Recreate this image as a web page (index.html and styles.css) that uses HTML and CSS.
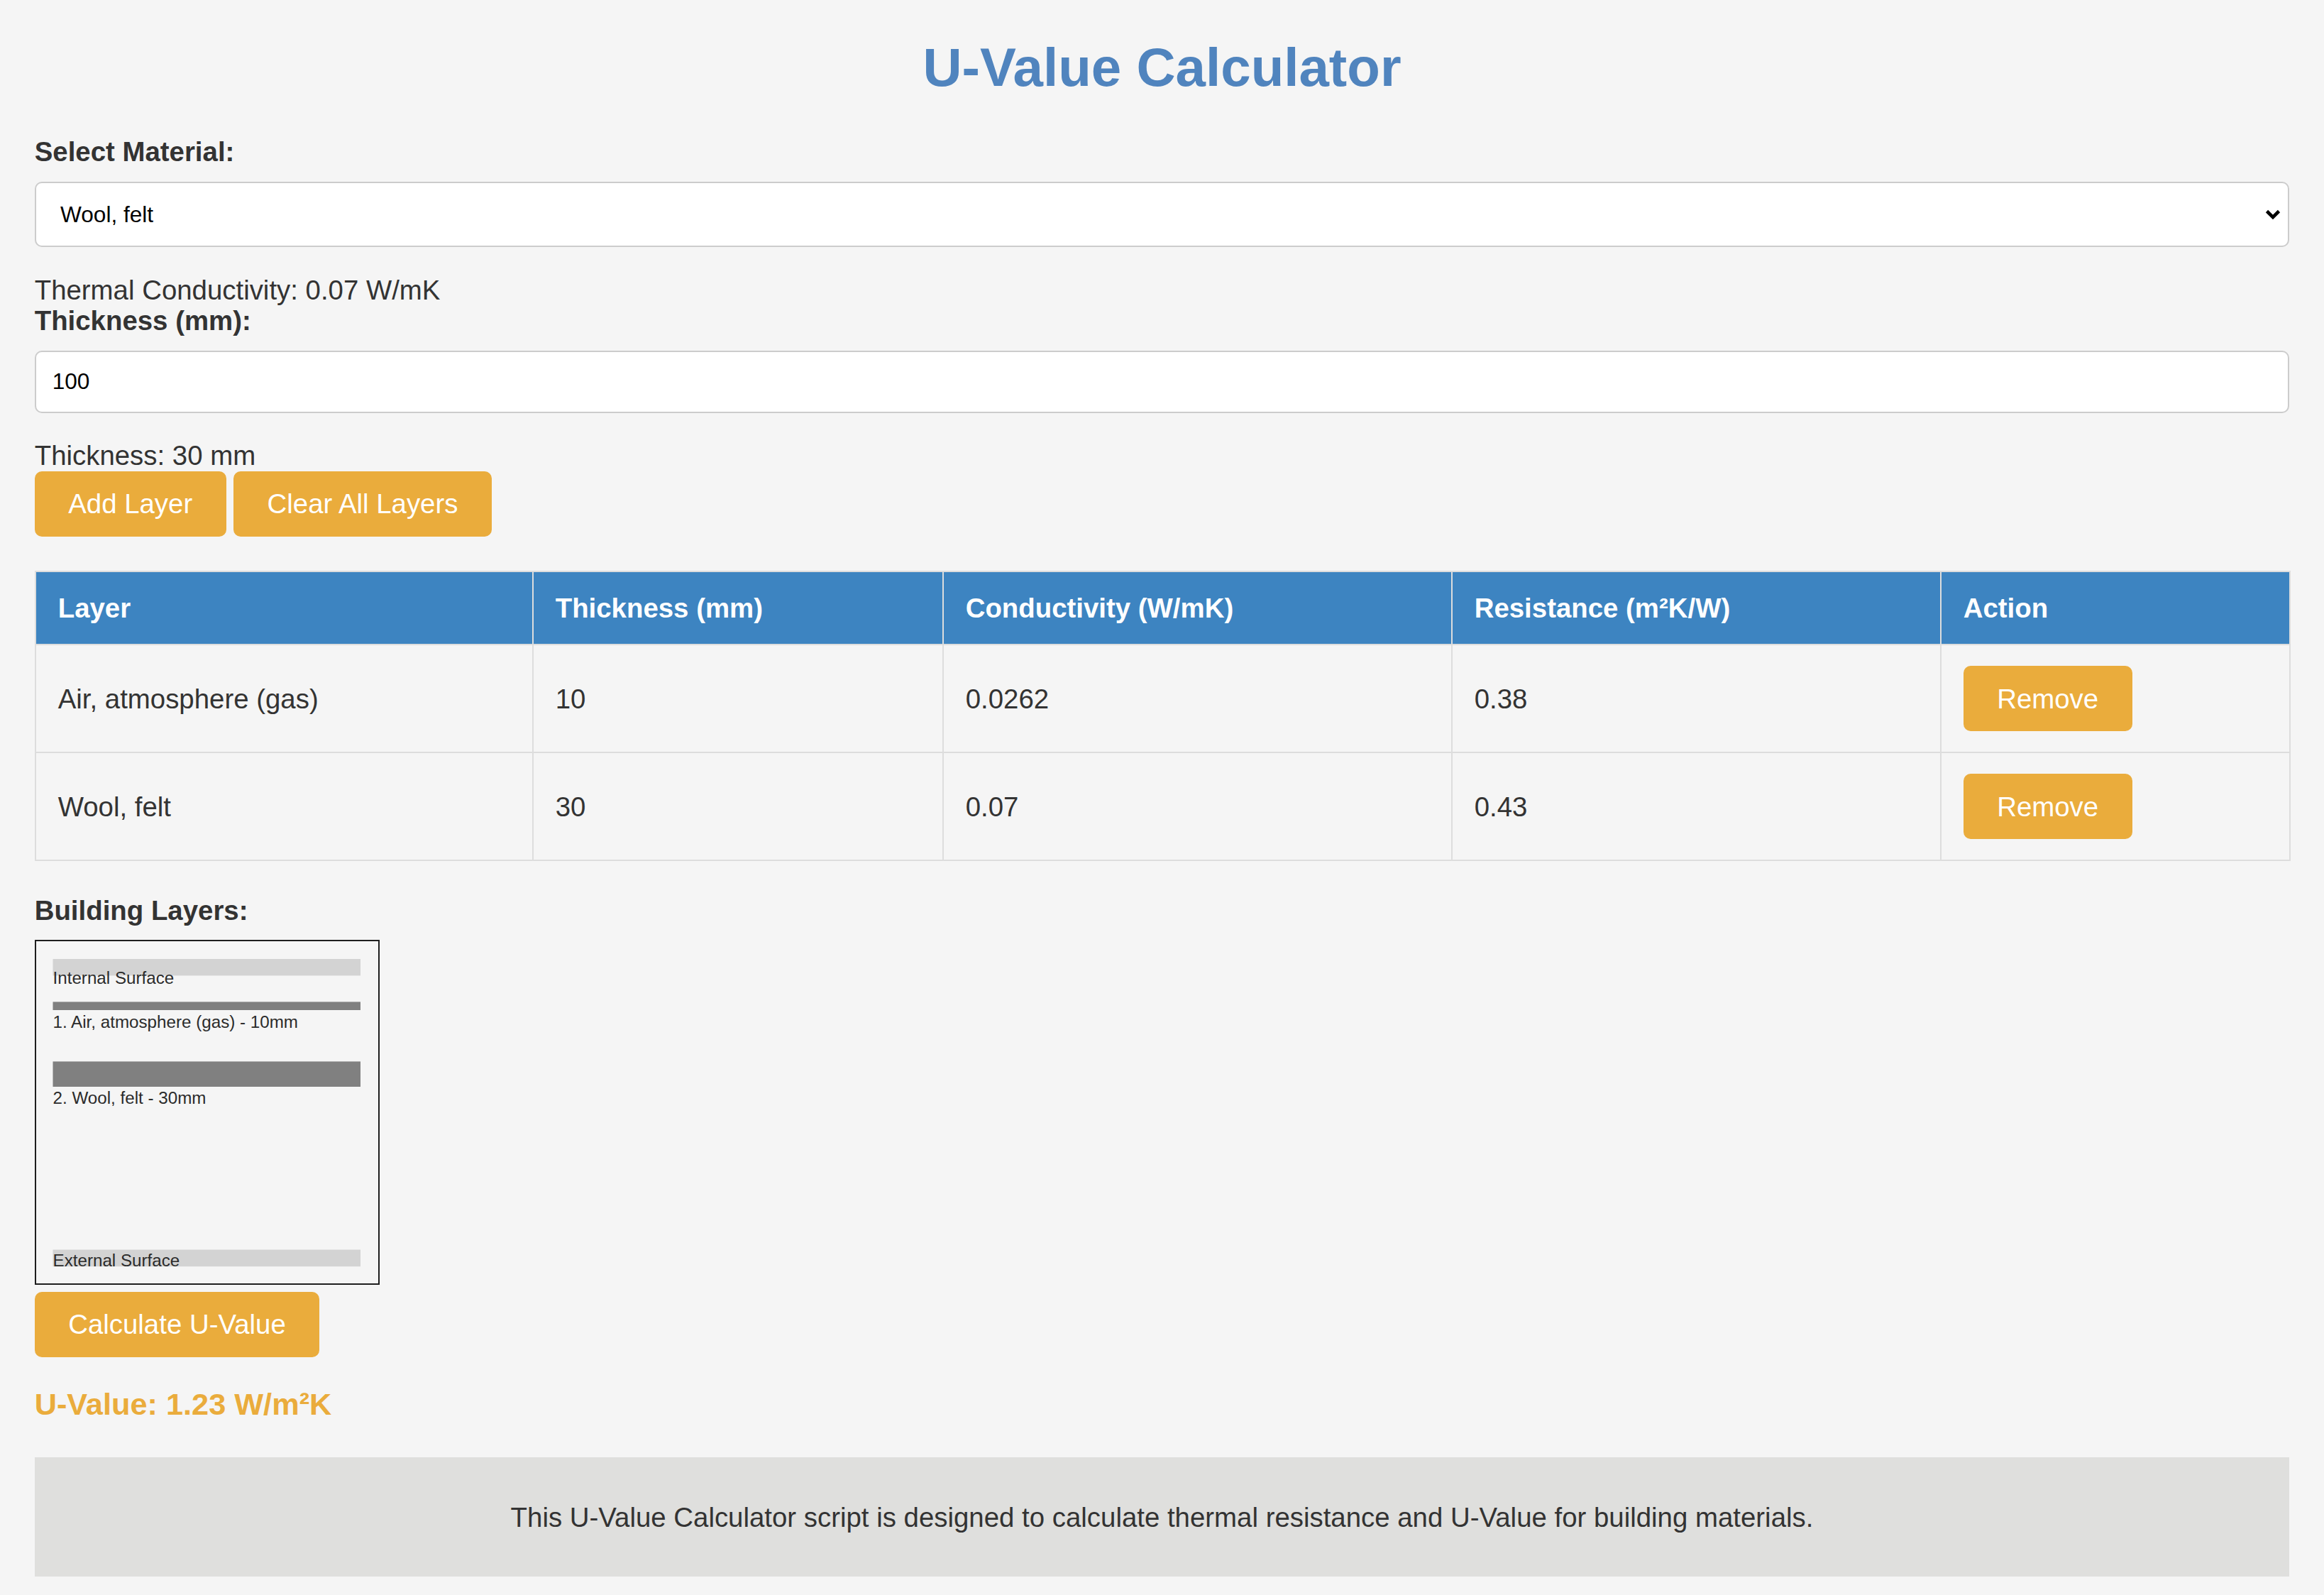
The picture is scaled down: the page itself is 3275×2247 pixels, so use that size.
FILE: index.html
```html
<!DOCTYPE html>
<html lang="en">
<head>
<meta charset="utf-8">
<title>U-Value Calculator</title>
<link rel="stylesheet" href="styles.css">
</head>
<body>
<div class="page">
  <h1 class="title">U-Value Calculator</h1>

  <label class="field-label label-first" for="material">Select Material:</label>
  <div class="select-wrap">
    <select id="material" class="select">
      <option>Wool, felt</option>
      <option>Air, atmosphere (gas)</option>
    </select>
    <svg class="chevron" width="22" height="14" viewBox="0 0 22 14" aria-hidden="true">
      <path d="M2.5 2.5 L11 11 L19.5 2.5" fill="none" stroke="#000" stroke-width="4.6"/>
    </svg>
  </div>

  <p class="info info-conductivity">Thermal Conductivity: 0.07 W/mK</p>
  <label class="field-label" for="thickness">Thickness (mm):</label>
  <input id="thickness" class="text-input" type="text" value="100">

  <p class="info info-thickness">Thickness: 30 mm</p>
  <div class="btn-row">
    <button class="btn">Add Layer</button>
    <button class="btn">Clear All Layers</button>
  </div>

  <table class="layers">
    <thead>
      <tr>
        <th class="col1">Layer</th>
        <th class="col2">Thickness (mm)</th>
        <th class="col3">Conductivity (W/mK)</th>
        <th class="col4">Resistance (m²K/W)</th>
        <th class="col5">Action</th>
      </tr>
    </thead>
    <tbody>
      <tr>
        <td>Air, atmosphere (gas)</td>
        <td>10</td>
        <td>0.0262</td>
        <td>0.38</td>
        <td><button class="btn">Remove</button></td>
      </tr>
      <tr>
        <td>Wool, felt</td>
        <td>30</td>
        <td>0.07</td>
        <td>0.43</td>
        <td><button class="btn">Remove</button></td>
      </tr>
    </tbody>
  </table>

  <h3 class="section-label">Building Layers:</h3>
  <div class="canvas">
    <svg class="diagram" width="482" height="482" viewBox="0 0 482 482">
      <rect x="23.5" y="25" width="433.5" height="23.4" fill="#d3d3d3"/>
      <text x="23.5" y="60.4">Internal Surface</text>
      <rect x="23.5" y="85.4" width="433.5" height="11.6" fill="#808080"/>
      <text x="23.5" y="121.6">1. Air, atmosphere (gas) - 10mm</text>
      <rect x="23.5" y="169.4" width="433.5" height="35.6" fill="#808080"/>
      <text x="23.5" y="229">2. Wool, felt - 30mm</text>
      <rect x="23.5" y="434.5" width="433.5" height="23.7" fill="#d3d3d3"/>
      <text x="23.5" y="457.8">External Surface</text>
    </svg>
  </div>

  <div class="calc-row">
    <button class="btn">Calculate U-Value</button>
  </div>

  <div class="result">U-Value: 1.23 W/m²K</div>

  <footer class="footer">This U-Value Calculator script is designed to calculate thermal resistance and U-Value for building materials.</footer>
</div>
</body>
</html>
```

FILE: styles.css
```css
* {
  box-sizing: border-box;
}

html, body {
  margin: 0;
  padding: 0;
  background: #f5f5f5;
}

body {
  font-family: "Liberation Sans", Arial, Helvetica, sans-serif;
  font-size: 38.4px;
  line-height: 43.2px;
  color: #333;
}

.page {
  padding: 50.7px 48.7px 25.3px;
  display: flex;
  flex-direction: column;
  align-items: stretch;
}

.title {
  margin: 0;
  text-align: center;
  font-size: 76.3px;
  line-height: 87.4px;
  font-weight: bold;
  color: #5084be;
}

.field-label {
  display: block;
  font-weight: bold;
  line-height: 43.2px;
}

.label-first {
  margin-top: 53.9px;
}

.select-wrap {
  position: relative;
  margin-top: 20.8px;
}

.select {
  display: block;
  width: 100%;
  height: 92px;
  appearance: none;
  -webkit-appearance: none;
  background: #fff;
  border: 2px solid #ccc;
  border-radius: 10px;
  padding: 0 60px 0 34.3px;
  font-family: "Liberation Sans", Arial, Helvetica, sans-serif;
  font-size: 31.6px;
  color: #000;
  margin: 0;
}

.chevron {
  position: absolute;
  right: 12px;
  top: 39px;
  pointer-events: none;
}

.info {
  margin: 0;
  line-height: 43.2px;
}

.info-conductivity {
  margin-top: 39px;
}

.text-input {
  display: block;
  width: 100%;
  height: 88px;
  margin: 20.6px 0 0;
  background: #fff;
  border: 2px solid #ccc;
  border-radius: 10px;
  padding: 0 23px;
  font-family: "Liberation Sans", Arial, Helvetica, sans-serif;
  font-size: 31.6px;
  color: #000;
}

.info-thickness {
  margin-top: 38.4px;
}

.btn-row {
  display: flex;
  gap: 10.4px;
  margin-top: 0.4px;
}

.btn {
  display: inline-block;
  height: 92px;
  padding: 0 47.5px;
  border: 0;
  border-radius: 10px;
  background: #eaac3c;
  color: #fff;
  font-family: "Liberation Sans", Arial, Helvetica, sans-serif;
  font-size: 38.4px;
  line-height: 43.2px;
  cursor: pointer;
}

.layers {
  margin-top: 48px;
  width: 100%;
  border-collapse: collapse;
  table-layout: fixed;
}

.layers th,
.layers td {
  border: 2px solid #ddd;
  padding: 29px 31px;
  text-align: left;
  vertical-align: middle;
  line-height: 43.2px;
}

.layers th {
  background: #3d84c1;
  color: #fff;
  font-weight: bold;
}

.layers td {
  color: #333;
}

.layers td .btn {
  vertical-align: middle;
}

.col1 { width: 701px; }
.col2 { width: 578px; }
.col3 { width: 717px; }
.col4 { width: 689px; }
.col5 { width: 492px; }

.section-label {
  margin: 47.8px 0 0;
  font-size: 38.4px;
  line-height: 43.2px;
  font-weight: bold;
  color: #333;
}

.canvas {
  margin-top: 19.6px;
  width: 486px;
  height: 486px;
  border: 2px solid #1e1e1e;
}

.diagram {
  display: block;
}

.diagram text {
  font-family: "Liberation Sans", Arial, Helvetica, sans-serif;
  font-size: 24.2px;
  fill: #2b2b2b;
}

.calc-row {
  display: flex;
  margin-top: 10px;
}

.result {
  margin-top: 41.2px;
  font-size: 43.3px;
  line-height: 50px;
  font-weight: bold;
  color: #eaac3c;
}

.footer {
  margin-top: 50px;
  padding: 62.65px 20px;
  background: #dfdfdd;
  text-align: center;
  color: #333;
  line-height: 43.2px;
}
```
